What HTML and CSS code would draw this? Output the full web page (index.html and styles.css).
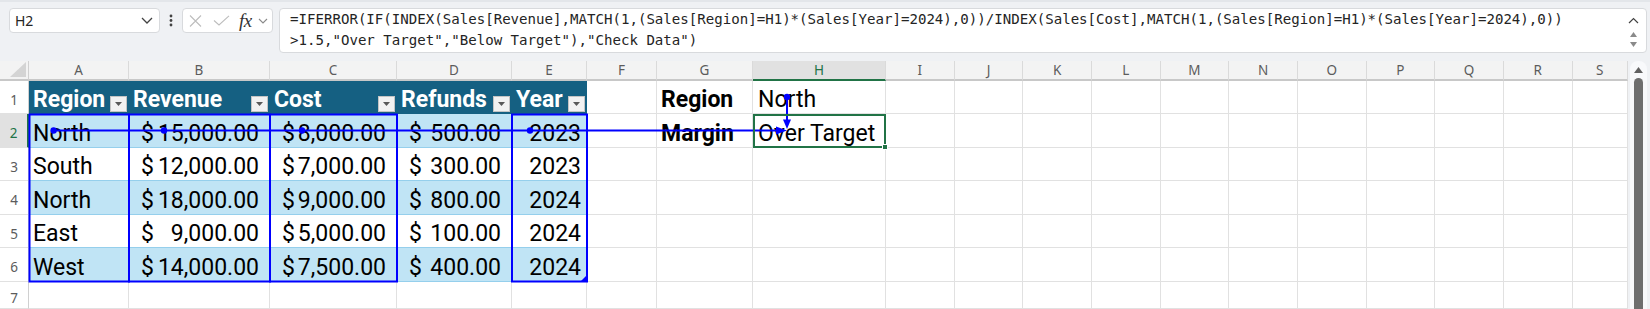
FILE: index.html
```html
<!DOCTYPE html>
<html lang="en">
<head>
<meta charset="utf-8">
<title>Sheet</title>
<link rel="stylesheet" href="styles.css">
</head>
<body>
<div class="app">
  <div class="topbar">
    <div class="namebox">
      <span class="nb-text">H2</span>
      <svg class="nb-chev" width="12" height="7" viewBox="0 0 12 7"><path d="M1 1 L6 6 L11 1" fill="none" stroke="#424242" stroke-width="1.3"/></svg>
    </div>
    <div class="grip">
      <svg width="4" height="13" viewBox="0 0 4 13"><circle cx="2" cy="2" r="1.4" fill="#424242"/><circle cx="2" cy="6.5" r="1.4" fill="#424242"/><circle cx="2" cy="11" r="1.4" fill="#424242"/></svg>
    </div>
    <div class="fxbox">
      <svg class="fx-x" width="13" height="12" viewBox="0 0 13 12"><path d="M1 0.5 L12 11.5 M12 0.5 L1 11.5" stroke="#bdbdbd" stroke-width="1.1" fill="none"/></svg>
      <svg class="fx-ok" width="17" height="11" viewBox="0 0 17 11"><path d="M1 5.5 L6 10 L16 0.8" stroke="#bdbdbd" stroke-width="1.1" fill="none"/></svg>
      <span class="fx">fx</span>
      <svg class="fx-chev" width="10" height="6" viewBox="0 0 10 6"><path d="M1 1 L5 5 L9 1" fill="none" stroke="#8a8a8a" stroke-width="1.1"/></svg>
    </div>
    <div class="formula">
      <div class="ftext"><div>=IFERROR(IF(INDEX(Sales[Revenue],MATCH(1,(Sales[Region]=H1)*(Sales[Year]=2024),0))/INDEX(Sales[Cost],MATCH(1,(Sales[Region]=H1)*(Sales[Year]=2024),0))</div><div>&gt;1.5,"Over Target","Below Target"),"Check Data")</div></div>
      <div class="fctrl">
        <svg class="fc-up" width="11" height="7" viewBox="0 0 11 7"><path d="M1 6 L5.5 1.5 L10 6" fill="none" stroke="#424242" stroke-width="1.2"/></svg>
        <svg class="fc-tri" width="7" height="5" viewBox="0 0 7 5"><path d="M0 5 L3.5 0 L7 5 Z" fill="#8a8a8a"/></svg>
        <svg class="fc-tri" width="7" height="5" viewBox="0 0 7 5"><path d="M0 0 L3.5 5 L7 0 Z" fill="#8a8a8a"/></svg>
      </div>
    </div>
  </div>

  <div class="sheet">
    <div class="grid">
      <!-- column headers -->
      <div class="corner"><svg width="16" height="15" viewBox="0 0 16 15"><path d="M16 0 L16 15 L0 15 Z" fill="#d4d4d4"/></svg></div>
      <div class="ch">A</div><div class="ch">B</div><div class="ch">C</div><div class="ch">D</div><div class="ch">E</div><div class="ch">F</div><div class="ch">G</div><div class="ch sel">H</div><div class="ch">I</div><div class="ch">J</div><div class="ch">K</div><div class="ch">L</div><div class="ch">M</div><div class="ch">N</div><div class="ch">O</div><div class="ch">P</div><div class="ch">Q</div><div class="ch">R</div><div class="ch">S</div>

      <!-- row 1 -->
      <div class="rh">1</div>
      <div class="c th"><span class="tht">Region</span><span class="fb"><svg width="7" height="4" viewBox="0 0 7 4"><path d="M0 0 L7 0 L3.5 4 Z" fill="#595959"/></svg></span></div>
      <div class="c th"><span class="tht">Revenue</span><span class="fb"><svg width="7" height="4" viewBox="0 0 7 4"><path d="M0 0 L7 0 L3.5 4 Z" fill="#595959"/></svg></span></div>
      <div class="c th"><span class="tht">Cost</span><span class="fb"><svg width="7" height="4" viewBox="0 0 7 4"><path d="M0 0 L7 0 L3.5 4 Z" fill="#595959"/></svg></span></div>
      <div class="c th"><span class="tht">Refunds</span><span class="fb"><svg width="7" height="4" viewBox="0 0 7 4"><path d="M0 0 L7 0 L3.5 4 Z" fill="#595959"/></svg></span></div>
      <div class="c th"><span class="tht">Year</span><span class="fb"><svg width="7" height="4" viewBox="0 0 7 4"><path d="M0 0 L7 0 L3.5 4 Z" fill="#595959"/></svg></span></div>
      <div class="c"></div>
      <div class="c b">Region</div>
      <div class="c hcol">North</div>
      <div class="c"></div><div class="c"></div><div class="c"></div><div class="c"></div><div class="c"></div><div class="c"></div><div class="c"></div><div class="c"></div><div class="c"></div><div class="c"></div><div class="c"></div>

      <!-- row 2 -->
      <div class="rh sel">2</div>
      <div class="c band">North</div>
      <div class="c band acct"><span>$</span><span>15,000.00</span></div>
      <div class="c band acct"><span>$</span><span>8,000.00</span></div>
      <div class="c band acct"><span>$</span><span>500.00</span></div>
      <div class="c band num">2023</div>
      <div class="c"></div>
      <div class="c b">Margin</div>
      <div class="c hcol">Over Target</div>
      <div class="c"></div><div class="c"></div><div class="c"></div><div class="c"></div><div class="c"></div><div class="c"></div><div class="c"></div><div class="c"></div><div class="c"></div><div class="c"></div><div class="c"></div>

      <!-- row 3 -->
      <div class="rh">3</div>
      <div class="c tw">South</div>
      <div class="c tw acct"><span>$</span><span>12,000.00</span></div>
      <div class="c tw acct"><span>$</span><span>7,000.00</span></div>
      <div class="c tw acct"><span>$</span><span>300.00</span></div>
      <div class="c tw num">2023</div>
      <div class="c"></div><div class="c"></div><div class="c"></div>
      <div class="c"></div><div class="c"></div><div class="c"></div><div class="c"></div><div class="c"></div><div class="c"></div><div class="c"></div><div class="c"></div><div class="c"></div><div class="c"></div><div class="c"></div>

      <!-- row 4 -->
      <div class="rh">4</div>
      <div class="c band">North</div>
      <div class="c band acct"><span>$</span><span>18,000.00</span></div>
      <div class="c band acct"><span>$</span><span>9,000.00</span></div>
      <div class="c band acct"><span>$</span><span>800.00</span></div>
      <div class="c band num">2024</div>
      <div class="c"></div><div class="c"></div><div class="c"></div>
      <div class="c"></div><div class="c"></div><div class="c"></div><div class="c"></div><div class="c"></div><div class="c"></div><div class="c"></div><div class="c"></div><div class="c"></div><div class="c"></div><div class="c"></div>

      <!-- row 5 -->
      <div class="rh">5</div>
      <div class="c tw">East</div>
      <div class="c tw acct"><span>$</span><span>9,000.00</span></div>
      <div class="c tw acct"><span>$</span><span>5,000.00</span></div>
      <div class="c tw acct"><span>$</span><span>100.00</span></div>
      <div class="c tw num">2024</div>
      <div class="c"></div><div class="c"></div><div class="c"></div>
      <div class="c"></div><div class="c"></div><div class="c"></div><div class="c"></div><div class="c"></div><div class="c"></div><div class="c"></div><div class="c"></div><div class="c"></div><div class="c"></div><div class="c"></div>

      <!-- row 6 -->
      <div class="rh">6</div>
      <div class="c band">West</div>
      <div class="c band acct"><span>$</span><span>14,000.00</span></div>
      <div class="c band acct"><span>$</span><span>7,500.00</span></div>
      <div class="c band acct"><span>$</span><span>400.00</span></div>
      <div class="c band num">2024</div>
      <div class="c"></div><div class="c"></div><div class="c"></div>
      <div class="c"></div><div class="c"></div><div class="c"></div><div class="c"></div><div class="c"></div><div class="c"></div><div class="c"></div><div class="c"></div><div class="c"></div><div class="c"></div><div class="c"></div>

      <!-- row 7 -->
      <div class="rh">7</div>
      <div class="c"></div><div class="c"></div><div class="c"></div><div class="c"></div><div class="c"></div><div class="c"></div><div class="c"></div><div class="c"></div>
      <div class="c"></div><div class="c"></div><div class="c"></div><div class="c"></div><div class="c"></div><div class="c"></div><div class="c"></div><div class="c"></div><div class="c"></div><div class="c"></div><div class="c"></div>
    </div>

    <div class="vscroll">
      <div class="vs-track">
        <svg class="vs-up" width="9" height="6" viewBox="0 0 9 6"><path d="M0 6 L4.5 0 L9 6 Z" fill="#616161"/></svg>
        <div class="vs-thumb"></div>
      </div>
    </div>
  </div>

  <svg class="overlay" width="1650" height="309" viewBox="0 0 1650 309">
    <g fill="none" stroke="#0000ff" stroke-width="2">
      <rect x="29.5" y="114.5" width="99.5" height="167"/>
      <rect x="129" y="114.5" width="141" height="167"/>
      <rect x="270" y="114.5" width="127" height="167"/>
      <rect x="512" y="114.5" width="75" height="167"/>
      <path d="M53.6 130.5 H779"/>
      <path d="M787 97 V121"/>
    </g>
    <g fill="#0000ff">
      <polygon points="776,126.5 787,130.5 776,134.5"/>
      <polygon points="783,119.5 787,129 791,119.5"/>
      <circle cx="53.6" cy="130.5" r="3.2"/>
      <circle cx="164" cy="130.5" r="3.2"/>
      <circle cx="302" cy="130.5" r="3.2"/>
      <circle cx="530" cy="130.5" r="3.2"/>
      <circle cx="787" cy="97" r="3.2"/>
      <polygon points="581,281 587,281 587,275"/>
    </g>
    <rect x="754" y="115" width="131" height="32" fill="none" stroke="#217346" stroke-width="2"/>
    <rect x="882.5" y="144.5" width="5" height="5" fill="#217346" stroke="#ffffff" stroke-width="1"/>
  </svg>
</div>
</body>
</html>
```

FILE: styles.css
```css
* {
  box-sizing: border-box;
  margin: 0;
  padding: 0;
}

html, body {
  width: 1650px;
  height: 309px;
  overflow: hidden;
  background: #ffffff;
}

body {
  font-family: "Noto Sans", "Open Sans", sans-serif;
}

.app {
  position: relative;
  width: 1650px;
  height: 309px;
}

/* ---------- formula bar ---------- */
.topbar {
  height: 61px;
  background: #eff1f4;
  border-top: 2px solid #e3e6ea;
  display: flex;
  align-items: flex-start;
  padding: 6px 3px 0 9px;
}

.namebox {
  width: 151px;
  height: 25px;
  background: #ffffff;
  border: 1px solid #d8dadd;
  border-radius: 4px;
  display: flex;
  align-items: center;
  justify-content: space-between;
  padding: 0 6px 0 5px;
}

.nb-text {
  font-size: 14px;
  color: #242424;
}

.grip {
  width: 22px;
  height: 25px;
  display: flex;
  align-items: center;
  justify-content: center;
}

.fxbox {
  width: 91px;
  height: 25px;
  background: #ffffff;
  border: 1px solid #d8dadd;
  border-radius: 4px;
  display: flex;
  align-items: center;
  padding-left: 6px;
}

.fx-ok {
  margin-left: 11px;
}

.fx {
  margin-left: 9px;
  font-family: "Liberation Serif", "DejaVu Serif", serif;
  font-style: italic;
  font-size: 19px;
  line-height: 20px;
  color: #333333;
  letter-spacing: -0.5px;
}

.fx-chev {
  margin-left: 6px;
}

.formula {
  margin-left: 6px;
  width: 1368px;
  height: 45px;
  background: #ffffff;
  border: 1px solid #d8dadd;
  border-radius: 4px;
  display: flex;
  justify-content: space-between;
}

.ftext {
  font-family: "DejaVu Sans Mono", "Liberation Mono", monospace;
  font-size: 14.1px;
  line-height: 21px;
  color: #242424;
  padding: 0 0 0 10px;
  white-space: pre;
}

.fctrl {
  width: 22px;
  display: flex;
  flex-direction: column;
  align-items: center;
  padding: 8px 3px 0 0;
}

.fc-up {
  margin-bottom: 8px;
}

.fc-tri {
  margin-bottom: 5px;
}

/* ---------- sheet ---------- */
.sheet {
  display: flex;
  height: 248px;
}

.grid {
  width: 1628px;
  display: grid;
  grid-template-columns: 29px 100px 141px 127px 115px 75px 70px 96px 133px repeat(10, 68.67px) 55.3px;
  grid-template-rows: 20px 33px 34px 33px 34px 33px 34px 27px;
}

.corner {
  background: #f3f3f3;
  border-right: 1px solid #d0d0d0;
  border-bottom: 2px solid #c8c8c8;
  display: flex;
  align-items: flex-end;
  justify-content: flex-end;
  padding: 0 2px 2px 0;
}

.ch {
  background: #f3f3f3;
  border-right: 1px solid #dadada;
  border-bottom: 2px solid #c8c8c8;
  display: flex;
  align-items: center;
  justify-content: center;
  font-size: 13.5px;
  color: #5c5c5c;
  line-height: 18px;
}

.ch.sel {
  background: #e1e1e1;
  color: #217346;
  border-bottom-color: #217346;
}

.rh {
  background: #ffffff;
  border-right: 1px solid #d0d0d0;
  border-bottom: 1px solid #e1e1e1;
  display: flex;
  align-items: center;
  justify-content: center;
  font-size: 13.5px;
  color: #5c5c5c;
  padding-top: 5px;
}

.rh.sel {
  background: #e1e1e1;
  color: #217346;
  border-right: 2px solid #217346;
}

.c {
  border-right: 1px solid #e1e1e1;
  border-bottom: 1px solid #e1e1e1;
  display: flex;
  align-items: flex-end;
  padding: 0 4px 2px 4px;
  font-family: Roboto, "Noto Sans", sans-serif;
  font-size: 23px;
  line-height: 23px;
  color: #000000;
  white-space: nowrap;
  overflow: hidden;
}

.c.b {
  font-weight: 700;
}

.c.hcol {
  padding-left: 5px;
}

.c.th {
  background: #156082;
  border-color: #156082;
  color: #ffffff;
  font-weight: 700;
  padding: 0 1px 1px 4px;
  justify-content: space-between;
}

.tht {
  padding-bottom: 1px;
}

.fb {
  width: 17px;
  height: 16px;
  background: #f2f2f2;
  border: 1px solid #c4c4c4;
  display: flex;
  align-items: center;
  justify-content: center;
  flex-shrink: 0;
}

.c.band {
  background: #c0e4f5;
  border-right-color: #c0e4f5;
  border-bottom-color: #95cfec;
}

.c.tw {
  background: #ffffff;
  border-right-color: #ffffff;
  border-bottom-color: #95cfec;
}

.c.acct {
  justify-content: space-between;
  padding-left: 12px;
  padding-right: 10px;
}

.c.num {
  justify-content: flex-end;
  padding-right: 5px;
}

/* ---------- vertical scrollbar ---------- */
.vscroll {
  width: 22px;
  background: #eff1f4;
  padding: 0 3px 0 2px;
}

.vs-track {
  height: 100%;
  background: #f8f9fb;
  border-radius: 8px 8px 0 0;
  display: flex;
  flex-direction: column;
  align-items: center;
  padding-top: 6px;
}

.vs-up {
  flex-shrink: 0;
}

.vs-thumb {
  margin-top: 5px;
  width: 9px;
  flex: 1;
  background: #6e6e6e;
  border-radius: 5px 5px 0 0;
}

/* ---------- trace arrows / selection overlay ---------- */
.overlay {
  position: absolute;
  left: 0;
  top: 0;
  pointer-events: none;
}
```
